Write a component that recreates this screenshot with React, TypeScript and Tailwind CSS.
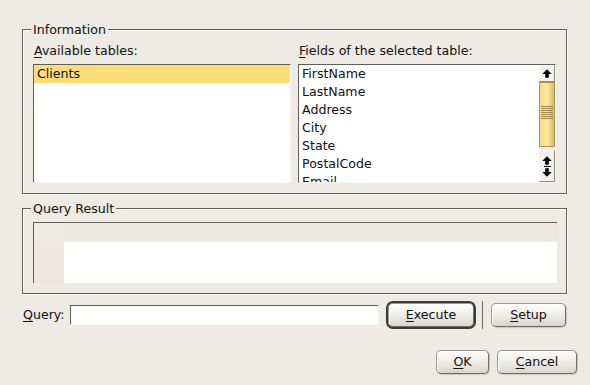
import React from 'react';

const fields = ['FirstName', 'LastName', 'Address', 'City', 'State', 'PostalCode', 'Email', 'Phone'];

const font = { fontFamily: '"DejaVu Sans", Verdana, sans-serif' };

function Mnemonic({ text }: { text: string }) {
  return (
    <>
      <span className="underline underline-offset-2">{text[0]}</span>
      {text.slice(1)}
    </>
  );
}

function Arrow({ down = false }: { down?: boolean }) {
  return (
    <svg width="10" height="9" viewBox="0 0 10 9" className={down ? 'rotate-180' : ''}>
      <path d="M5 0.3 L9.7 5 L6.8 5 L6.8 8.8 L3.2 8.8 L3.2 5 L0.3 5 Z" fill="#000" />
    </svg>
  );
}

function Button({ label, width, isDefault = false }: { label: string; width: string; isDefault?: boolean }) {
  return (
    <div
      className={`${width} flex h-[24px] items-center justify-center rounded-[5px] border border-[#9c9a90] border-r-[#6f6d66] border-b-[#6f6d66] bg-gradient-to-b from-[#fdfdfb] via-[#efede6] to-[#d9d6cc] text-[12.6px] text-[#111] shadow-[inset_1px_1px_0_#fff,1px_1px_1px_rgba(0,0,0,0.15)] ${
        isDefault ? 'outline outline-2 outline-offset-0 outline-[#3b3b38]' : ''
      }`}
    >
      <Mnemonic text={label} />
    </div>
  );
}

function GroupBox({ title, children, className }: { title: string; children: React.ReactNode; className?: string }) {
  return (
    <div className={`relative border border-[#5e5e5a] shadow-[inset_1px_1px_0_#fff,1px_1px_0_#fff] ${className ?? ''}`}>
      <span className="absolute left-[8px] top-[-8px] bg-[#edebe4] px-[2px] text-[12.6px] leading-[15px]">{title}</span>
      {children}
    </div>
  );
}

export default function App() {
  return (
    <div className="h-[385px] w-[590px] bg-[#edebe4] pt-[29px] text-[12.6px] text-[#111]" style={font}>
      {/* Information */}
      <GroupBox title="Information" className="ml-[22px] mr-[23px] px-[10px] pt-[13px] pb-[10px]">
        <div className="flex gap-[7px]">
          <div className="flex-1">
            <div className="pl-[1px] leading-[15px]">
              <Mnemonic text="Available tables:" />
            </div>
            <div className="mt-[6px] h-[119px] border border-[#5e5e5a] border-r-[#f7f6f2] border-b-[#f7f6f2] bg-white">
              <div className="h-[18px] bg-[#fedc78] pl-[3px] leading-[18px]">Clients</div>
            </div>
          </div>
          <div className="flex-1">
            <div className="pl-[1px] leading-[15px]">
              <Mnemonic text="Fields of the selected table:" />
            </div>
            <div className="mt-[6px] flex h-[119px] border border-[#5e5e5a] border-r-[#f7f6f2] border-b-[#f7f6f2] bg-white">
              <div className="flex-1 overflow-hidden">
                {fields.map((f) => (
                  <div key={f} className="h-[18px] pl-[3px] leading-[18px]">
                    {f}
                  </div>
                ))}
              </div>
              {/* scrollbar */}
              <div className="flex w-[16px] flex-col bg-[#edebe4]">
                <div className="flex h-[17px] items-center justify-center border border-[#f7f6f2] border-r-[#8a887f] border-b-[#8a887f] bg-[#f2f1ec]">
                  <Arrow />
                </div>
                <div className="relative h-[65px] border border-[#a4935a] bg-gradient-to-r from-[#f1dc88] via-[#fde99c] to-[#d6bb62]">
                  <div className="absolute left-[1px] right-[1px] top-[23px] flex flex-col gap-[1px]">
                    {[0, 1, 2, 3, 4, 5, 6].map((i) => (
                      <div key={i} className="h-[1px] bg-[#9c8a4e]" />
                    ))}
                  </div>
                </div>
                <div className="mt-[3px] flex flex-1 flex-col items-center justify-center gap-[1px] border border-[#f7f6f2] border-r-[#8a887f] border-b-[#8a887f] bg-[#f2f1ec]">
                  <Arrow />
                  <div className="h-[1px] w-[7px] bg-black" />
                  <Arrow down />
                </div>
              </div>
            </div>
          </div>
        </div>
      </GroupBox>

      {/* Query Result */}
      <GroupBox title="Query Result" className="ml-[22px] mr-[23px] mt-[14px] pl-[10px] pr-[9px] pt-[13px] pb-[10px]">
        <div className="flex h-[61px] border-l border-t border-[#5e5e5a] bg-white">
          <div className="flex w-[30px] flex-col">
            <div className="h-[19px] bg-[#edebe4]" />
            <div className="flex-1 bg-[#ede9df]" />
          </div>
          <div className="flex flex-1 flex-col">
            <div className="h-[19px] bg-[#ede9df]" />
          </div>
        </div>
      </GroupBox>

      {/* Query row */}
      <div className="ml-[23px] mt-[7px] flex items-center">
        <div className="w-[47px]">
          <Mnemonic text="Query:" />
        </div>
        <div className="h-[20px] w-[309px] border border-[#5e5e5a] border-r-[#f7f6f2] border-b-[#f7f6f2] bg-white" />
        <div className="ml-[9px]">
          <Button label="Execute" width="w-[86px]" isDefault />
        </div>
        <div className="ml-[8px] h-[28px] w-[1px] bg-[#6f6d66]" />
        <div className="ml-[8px]">
          <Button label="Setup" width="w-[75px]" />
        </div>
      </div>

      {/* OK / Cancel */}
      <div className="mr-[13px] mt-[21px] flex justify-end gap-[8px]">
        <Button label="OK" width="w-[53px]" />
        <Button label="Cancel" width="w-[80px]" />
      </div>
    </div>
  );
}
